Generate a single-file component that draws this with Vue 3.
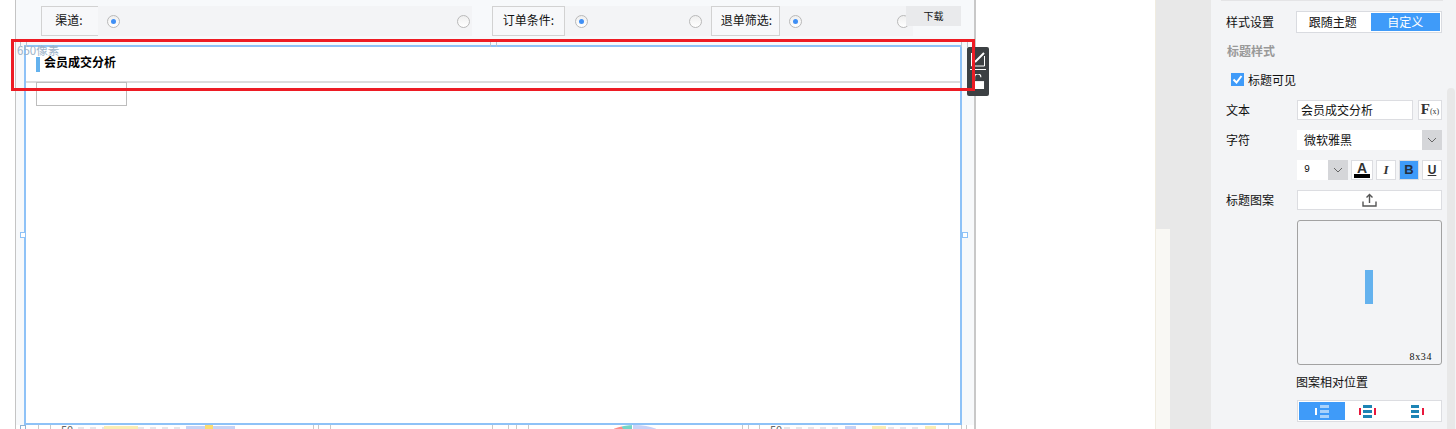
<script setup>
const filters = [
  { label: '渠道:', labelW: 57, w: 431, gap: 20, r1: 9, r2: 359, cls: 'first' },
  { label: '订单条件:', labelW: 73, w: 219, gap: 0, r1: 10, r2: 124, cls: '' },
  { label: '退单筛选:', labelW: 69, w: 202, gap: 0, r1: 9, r2: 117, cls: 'last' },
]
const marks = [25, 38, 50, 313, 318, 330, 492, 508, 516, 528, 742, 748, 759, 948, 961, 966]
</script>

<template>
  <div class="page">
    <div class="gutter"></div>

    <main class="canvas">
      <div class="filters">
        <div
          v-for="f in filters"
          :key="f.label"
          class="filter"
          :style="{ width: f.w + 'px', marginRight: f.gap + 'px' }"
        >
          <div class="flabel" :class="f.cls" :style="{ width: f.labelW + 'px' }">{{ f.label }}</div>
          <span class="radio on" :style="{ marginLeft: f.r1 + 'px' }"></span>
          <span class="radio" :style="{ marginLeft: f.r2 - f.r1 - 13 + 'px' }"></span>
        </div>
      </div>
      <div class="download">下载</div>

      <section class="frame">
        <header class="title-bar">
          <span class="tag"></span>
          <span class="title">会员成交分析</span>
        </header>
        <div class="sub-box"></div>
      </section>

      <div class="size-hint">650像素</div>
      <span class="cell" style="left: 4px; top: 40px"></span>
      <span class="cell" style="left: 474px; top: 40px"></span>
      <span class="cell" style="left: 945px; top: 40px"></span>
      <span class="handle" style="left: 4px; top: 232px"></span>
      <span class="handle" style="left: 946px; top: 232px"></span>

      <div class="red-box"></div>

      <div class="tools">
        <svg class="tool-edit" width="16" height="16" viewBox="0 0 16 16">
          <path d="M1.5 2v13h13V5" fill="none" stroke="#fff" stroke-width="1" />
          <path d="M5 11L14 2" stroke="#fff" stroke-width="2" />
        </svg>
        <span class="tool-line"></span>
        <svg class="tool-lock" width="16" height="19" viewBox="0 0 16 19">
          <path d="M3 8V4a4 4 0 0 1 8 0" fill="none" stroke="#fff" stroke-width="1.5" />
          <rect x="1" y="9" width="14" height="10" fill="#fff" />
        </svg>
      </div>

      <div class="remnants">
        <i v-for="m in marks" :key="m" class="mark" :style="{ left: m - 16 + 'px' }"></i>
        <span class="cell-low"></span>
        <span class="num" style="left: 45px">50</span>
        <span class="num" style="left: 754px">50</span>
        <span class="dash" style="left: 62px; width: 30px"></span>
        <span class="chip yellow" style="left: 88px; width: 34px"></span>
        <span class="dash" style="left: 122px; width: 46px"></span>
        <span class="chip lilac" style="left: 170px; width: 30px"></span>
        <span class="chip yellowd" style="left: 189px; width: 8px"></span>
        <span class="chip lilac" style="left: 197px; width: 22px"></span>
        <span class="dash" style="left: 768px; width: 56px"></span>
        <span class="chip lilac" style="left: 829px; width: 11px"></span>
        <span class="chip yellow" style="left: 856px; width: 14px"></span>
        <span class="dash" style="left: 872px; width: 36px"></span>
        <span class="chip yellow" style="left: 909px; width: 11px"></span>
        <span class="pie"></span>
      </div>
    </main>

    <div class="blank"></div>
    <div class="scroll-a"><div class="scroll-thumb"></div></div>
    <div class="pad"></div>

    <aside class="panel">
      <div class="panel-body">
        <div class="top-rule"></div>
        <div class="row style-row">
          <span class="lab">样式设置</span>
          <div class="segment">
            <span class="seg">跟随主题</span>
            <span class="seg active">自定义</span>
          </div>
        </div>
        <div class="section">标题样式</div>
        <label class="check-row">
          <span class="check">
            <svg width="13" height="13" viewBox="0 0 13 13">
              <path d="M2.5 6.5l3 3 5-6.5" fill="none" stroke="#fff" stroke-width="2" />
            </svg>
          </span>
          标题可见
        </label>
        <div class="row r-text">
          <span class="lab">文本</span>
          <div class="input grow">会员成交分析</div>
          <div class="fx"><b>F</b><small>(x)</small></div>
        </div>
        <div class="row r-font">
          <span class="lab">字符</span>
          <div class="select grow">
            <span class="sel-text">微软雅黑</span>
            <span class="caret">
              <svg width="10" height="6" viewBox="0 0 10 6"><path d="M1 1l4 4 4-4" fill="none" stroke="#666" /></svg>
            </span>
          </div>
        </div>
        <div class="row r-format">
          <span class="lab"></span>
          <div class="select size">
            <span class="sel-num">9</span>
            <span class="caret">
              <svg width="10" height="6" viewBox="0 0 10 6"><path d="M1 1l4 4 4-4" fill="none" stroke="#666" /></svg>
            </span>
          </div>
          <div class="btn color"><span>A</span><i></i></div>
          <div class="btn italic">I</div>
          <div class="btn bold">B</div>
          <div class="btn under">U</div>
        </div>
        <div class="row r-upload">
          <span class="lab">标题图案</span>
          <div class="upload grow">
            <svg width="15" height="14" viewBox="0 0 15 14">
              <path d="M7.5 10V2M4.5 4.5l3-3 3 3" fill="none" stroke="#555" stroke-width="1.4" />
              <path d="M1 8.5v4.5h13V8.5" fill="none" stroke="#555" stroke-width="1.4" />
            </svg>
          </div>
        </div>
        <div class="preview">
          <span class="preview-bar"></span>
          <span class="preview-size">8x34</span>
        </div>
        <div class="pos-label">图案相对位置</div>
        <div class="pos-group">
          <span class="pos active">
            <svg width="14" height="13" viewBox="0 0 14 13">
              <rect x="0" y="3" width="2" height="7" fill="#fff" />
              <rect x="5" y="0" width="9" height="3" fill="#a9d2fb" />
              <rect x="5" y="5" width="9" height="3" fill="#a9d2fb" />
              <rect x="5" y="10" width="9" height="3" fill="#a9d2fb" />
            </svg>
          </span>
          <span class="pos">
            <svg width="17" height="13" viewBox="0 0 17 13">
              <rect x="4" y="0" width="9" height="3" fill="#1d84b5" />
              <rect x="4" y="5" width="9" height="3" fill="#1d84b5" />
              <rect x="4" y="10" width="9" height="3" fill="#1d84b5" />
              <rect x="0" y="3" width="2" height="7" fill="#e8173c" />
              <rect x="15" y="3" width="2" height="7" fill="#e8173c" />
            </svg>
          </span>
          <span class="pos third">
            <svg width="13" height="13" viewBox="0 0 13 13">
              <rect x="0" y="0" width="8" height="3" fill="#1d84b5" />
              <rect x="0" y="5" width="8" height="3" fill="#1d84b5" />
              <rect x="0" y="10" width="8" height="3" fill="#1d84b5" />
              <rect x="11" y="3" width="2" height="7" fill="#e8173c" />
            </svg>
          </span>
        </div>
      </div>
      <div class="scroll-b"><div class="scroll-b-thumb"></div></div>
    </aside>
  </div>
</template>

<style scoped>
.page {
  display: flex;
  width: 1456px;
  height: 429px;
  overflow: hidden;
  background: #fff;
  font-family: "Noto Sans CJK SC", "Liberation Sans", sans-serif;
  font-size: 12px;
  color: #111;
}
.gutter { width: 15px; flex: none; }
.canvas {
  position: relative;
  width: 961px;
  flex: none;
  box-sizing: border-box;
  height: 429px;
  background: #f7f9fb;
  border-left: 1px solid #c4c4c4;
  border-right: 2px solid #c8c8c8;
}
.filters {
  display: flex;
  height: 30px;
  padding: 6px 0 0 25px;
}
.filter {
  display: flex;
  align-items: center;
  height: 30px;
  background: #f3f4f6;
}
.flabel {
  box-sizing: border-box;
  flex: none;
  height: 30px;
  line-height: 26px;
  text-align: center;
  background: #f7f8fa;
  border: 1px solid #d2d2d2;
}
.flabel.first { border-right: none; padding-right: 2px; }
.flabel.last { padding-left: 2px; }
.radio {
  box-sizing: border-box;
  position: relative;
  flex: none;
  width: 13px;
  height: 13px;
  border: 1px solid #b9b9b9;
  border-radius: 50%;
  background: linear-gradient(#efefef, #fff);
}
.radio.on::after {
  content: "";
  position: absolute;
  left: 3px;
  top: 3px;
  width: 5px;
  height: 5px;
  border-radius: 50%;
  background: #3f8ff5;
}
.download {
  position: absolute;
  left: 890px;
  top: 6px;
  width: 55px;
  height: 20px;
  line-height: 20px;
  text-align: center;
  font-size: 10px;
  background: #e9eaec;
}
.frame {
  box-sizing: border-box;
  width: 938px;
  height: 380px;
  margin: 9px 0 0 8px;
  background: #fff;
  border: 2px solid #8ec2f7;
}
.title-bar {
  display: flex;
  align-items: center;
  box-sizing: border-box;
  height: 36px;
  padding: 1px 0 0 10px;
  border-bottom: 2px solid #dcdcdc;
}
.tag {
  width: 4px;
  height: 15px;
  margin-right: 4px;
  background: #64b2ee;
}
.title {
  font-size: 12px;
  line-height: 12px;
  font-weight: 700;
  color: #000;
  position: relative;
  top: -3px;
}
.sub-box {
  box-sizing: border-box;
  width: 91px;
  height: 24px;
  margin: -1px 0 0 10px;
  border: 1px solid #bdbdbd;
}
.size-hint {
  position: absolute;
  left: 1px;
  top: 45px;
  font-size: 11.5px;
  line-height: 11px;
  color: #9cb3c9;
}
.cell {
  position: absolute;
  width: 5px;
  height: 6px;
  border: 1px solid #b9c4cf;
  border-bottom: none;
}
.handle {
  position: absolute;
  width: 4px;
  height: 4px;
  border: 1px solid #8ec2f7;
  background: #fff;
}
.red-box {
  position: absolute;
  left: -5px;
  top: 39px;
  z-index: 1;
  box-sizing: border-box;
  width: 964px;
  height: 52px;
  border: 3px solid #ed1c24;
  pointer-events: none;
}
.tools {
  position: absolute;
  left: 951px;
  top: 47px;
  display: flex;
  flex-direction: column;
  align-items: center;
  width: 22px;
  height: 49px;
  border-radius: 2px;
  background: #3c4043;
}
.tool-edit { margin-top: 4px; }
.tool-line { width: 16px; height: 1px; margin-top: 2px; background: #fff; }
.tool-lock { margin-top: 4px; width: 13px; height: 15px; }
.remnants {
  position: absolute;
  left: 0;
  top: 425px;
  width: 958px;
  height: 4px;
  overflow: hidden;
  background: #fff;
}
.mark {
  position: absolute;
  top: 0;
  width: 1px;
  height: 4px;
  background: #c9c9c9;
}
.cell-low {
  position: absolute;
  left: 4px;
  top: 0;
  width: 4px;
  height: 4px;
  border: 1px solid #8fb3d6;
  border-bottom: none;
}
.num {
  position: absolute;
  top: -1px;
  font-size: 11px;
  line-height: 11px;
  color: #666;
}
.dash {
  position: absolute;
  top: 2px;
  height: 2px;
  background: repeating-linear-gradient(90deg, #e6e6ea 0 6px, #fff 6px 12px);
}
.chip {
  position: absolute;
  top: 1px;
  height: 3px;
}
.yellow { background: #f9edb4; }
.yellowd { background: #fbdc72; top: 0; height: 4px; }
.lilac { background: #c6d3f5; }
.pie {
  position: absolute;
  left: 557px;
  top: 0;
  width: 124px;
  height: 124px;
  border-radius: 50%;
  background: conic-gradient(#c8d2f7 0 20deg, #fff 20deg 340deg, #fb8f8a 340deg 348deg, #75d5c6 348deg 357deg, #fff 357deg 358deg, #c8d2f7 358deg);
}
.blank { width: 179px; flex: none; }
.scroll-a {
  position: relative;
  width: 15px;
  flex: none;
  background: #f9f8f4;
  border-left: 1px solid #f0ece0;
  box-sizing: border-box;
}
.scroll-thumb { height: 229px; background: #e8e8e8; }
.pad { width: 41px; flex: none; background: #e8e8e8; }
.panel {
  position: relative;
  display: flex;
  width: 245px;
  flex: none;
  background: #f3f4f6;
}
.panel-body {
  box-sizing: border-box;
  width: 236px;
  padding: 0 5px 0 15px;
}
.top-rule {
  height: 1px;
  margin: 0 -1px 0 -5px;
  background: #e4e4e6;
}
.row {
  display: flex;
  align-items: center;
  height: 20px;
}
.lab {
  flex: none;
  width: 71px;
  font-size: 12px;
  line-height: 20px;
}
.grow { flex: 1; min-width: 0; }
.style-row { height: 22px; margin-top: 10px; }
.segment {
  box-sizing: border-box;
  display: flex;
  width: 147px;
  height: 22px;
  margin-left: -1px;
  padding: 1px;
  background: #fff;
  border: 1px solid #d9dbe0;
}
.seg {
  flex: 1;
  line-height: 18px;
  text-align: center;
}
.seg:first-child { padding-right: 3px; }
.seg.active { background: #3f9bf9; color: #fff; }
.section {
  height: 18px;
  margin-top: 9px;
  padding-left: 1px;
  line-height: 18px;
  font-weight: 700;
  color: #999;
}
.check-row {
  display: flex;
  align-items: center;
  height: 18px;
  margin-top: 10px;
  padding-left: 5px;
  gap: 4px;
}
.check {
  display: block;
  width: 13px;
  height: 13px;
  background: #3f9bf9;
}
.check svg { display: block; }
.r-text { margin-top: 12px; }
.input {
  box-sizing: border-box;
  height: 20px;
  line-height: 18px;
  padding-left: 3px;
  background: #fff;
  border: 1px solid #dcdde1;
}
.fx {
  box-sizing: border-box;
  flex: none;
  width: 24px;
  height: 20px;
  margin-left: 5px;
  line-height: 17px;
  text-align: center;
  background: #fff;
  border: 1px solid #dcdde1;
  font-family: "Liberation Serif", serif;
}
.fx b { font-size: 15px; color: #333; }
.fx small { font-size: 8px; color: #333; }
.r-font { margin-top: 10px; }
.select {
  display: flex;
  height: 20px;
  background: #fff;
}
.sel-text { flex: 1; padding-left: 7px; line-height: 20px; }
.caret {
  display: flex;
  align-items: center;
  justify-content: center;
  width: 20px;
  background: #d5d6d9;
}
.r-format { margin-top: 10px; }
.select.size { width: 51px; flex: none; }
.sel-num {
  flex: 1;
  padding-left: 7px;
  font-size: 10px;
  line-height: 20px;
  font-family: "Liberation Mono", monospace;
}
.btn {
  box-sizing: border-box;
  flex: none;
  width: 20px;
  height: 20px;
  margin-left: 3px;
  text-align: center;
  line-height: 18px;
  background: #fff;
  border: 1px solid #dcdde1;
  font-family: "Liberation Sans", sans-serif;
  font-size: 13px;
  font-weight: 700;
  color: #333;
}
.btn.color { position: relative; width: 22px; line-height: 14px; font-size: 14px; }
.btn.color i {
  position: absolute;
  left: 2px;
  right: 2px;
  bottom: 1px;
  height: 4px;
  background: #000;
}
.btn.color span { display: block; }
.btn.italic { font-style: italic; font-family: "Liberation Serif", serif; }
.btn.bold { background: #3f9bf9; color: #253041; }
.btn.under { text-decoration: underline; font-size: 12px; }
.r-upload { margin-top: 10px; }
.upload {
  box-sizing: border-box;
  display: flex;
  align-items: center;
  justify-content: center;
  height: 20px;
  background: #fff;
  border: 1px solid #dcdde1;
}
.preview {
  position: relative;
  box-sizing: border-box;
  width: 145px;
  height: 145px;
  margin: 10px 0 0 71px;
  display: flex;
  align-items: center;
  justify-content: center;
  border: 1px solid #a2a2a2;
  border-radius: 3px;
}
.preview-bar { width: 8px; height: 34px; margin: -11px 2px 0 0; background: #64b2ee; }
.preview-size {
  position: absolute;
  right: 9px;
  bottom: 2px;
  font-family: "Liberation Serif", serif;
  font-size: 10px;
  letter-spacing: .6px;
  color: #111;
}
.pos-label {
  height: 20px;
  margin: 7px 0 0 70px;
  line-height: 20px;
}
.pos-group {
  box-sizing: border-box;
  display: flex;
  width: 145px;
  height: 22px;
  margin: 8px 0 0 71px;
  padding: 1px;
  background: #fff;
  border: 1px solid #dcdde1;
}
.pos {
  display: flex;
  align-items: center;
  justify-content: center;
  flex: 1;
}
.pos.active { background: #3f9bf9; }
.pos.third { padding-left: 4px; }
.scroll-b {
  width: 9px;
  padding-top: 88px;
}
.scroll-b-thumb {
  height: 341px;
  width: 8px;
  border-radius: 4px 4px 0 0;
  background: #e8e8e8;
}
</style>
